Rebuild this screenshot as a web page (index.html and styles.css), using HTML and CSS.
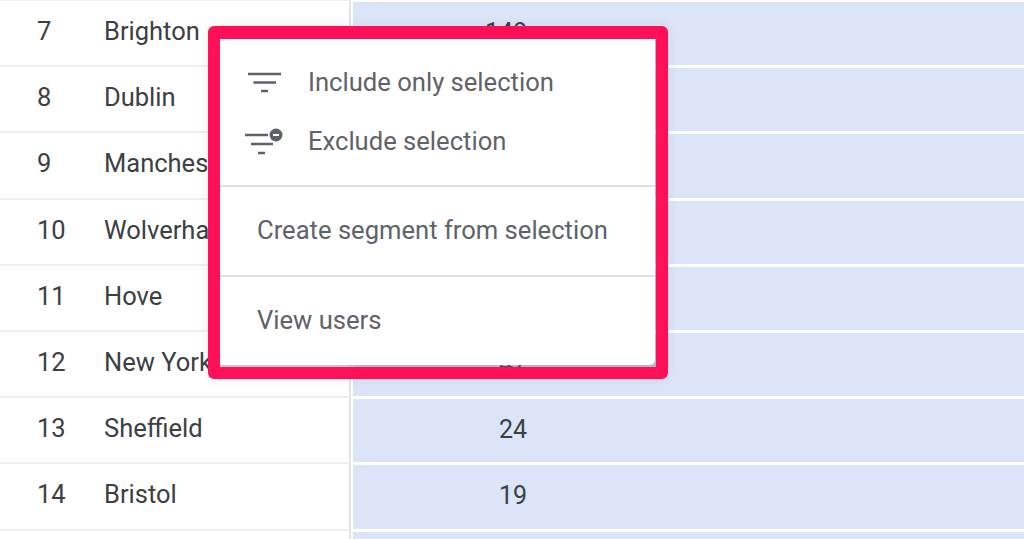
FILE: index.html
```html
<!DOCTYPE html>
<html lang="en">
<head>
<meta charset="utf-8">
<title>Cities</title>
<link rel="stylesheet" href="styles.css">
</head>
<body>
<div class="table">
  <div class="row"><div class="rank">7</div><div class="city">Brighton</div><div class="bar"><span class="val">148</span></div></div>
  <div class="row"><div class="rank">8</div><div class="city">Dublin</div><div class="bar"><span class="val">96</span></div></div>
  <div class="row"><div class="rank">9</div><div class="city">Manchester</div><div class="bar"><span class="val">71</span></div></div>
  <div class="row"><div class="rank">10</div><div class="city">Wolverhampton</div><div class="bar"><span class="val">55</span></div></div>
  <div class="row"><div class="rank">11</div><div class="city">Hove</div><div class="bar"><span class="val">48</span></div></div>
  <div class="row"><div class="rank">12</div><div class="city">New York</div><div class="bar"><span class="val">42</span></div></div>
  <div class="row"><div class="rank">13</div><div class="city">Sheffield</div><div class="bar"><span class="val">24</span></div></div>
  <div class="row"><div class="rank">14</div><div class="city">Bristol</div><div class="bar"><span class="val">19</span></div></div>
  <div class="row"><div class="rank"></div><div class="city"></div><div class="bar"></div></div>
</div>
<div class="menu">
  <div class="menu-inner">
    <div class="group first">
      <div class="item icon-item">
        <svg class="icon" viewBox="0 0 40 30" aria-hidden="true"><path d="M4 6h33M9.500 14.500h22.500M17 23h7" /></svg>
        <span>Include only selection</span>
      </div>
      <div class="item icon-item">
        <svg class="icon" viewBox="0 0 40 30" aria-hidden="true"><path d="M1 8h23M7 17h22M14 26h7" /><circle class="dot" cx="32" cy="8" r="6.500" /><path class="dash" d="M29 8h6" /></svg>
        <span>Exclude selection</span>
      </div>
    </div>
    <div class="group middle"><div class="item">Create segment from selection</div></div>
    <div class="group last"><div class="item">View users</div></div>
  </div>
</div>
</body>
</html>
```

FILE: styles.css
```css
html, body {
  margin: 0;
  height: 100%;
  overflow: hidden;
  background: #fff;
}
body {
  font-family: Roboto, "Liberation Sans", sans-serif;
  color: #3c4043;
}
.table {
  display: flex;
  flex-direction: column;
  margin-top: -1px;
}
.row {
  display: flex;
  height: 66.2px;
  flex: none;
  font-size: 25.500px;
  line-height: 60px;
}
.rank {
  width: 38px;
  padding-left: 37px;
  flex: none;
  border-top: 2px solid #eeeeee;
}
.city {
  width: 245px;
  padding-left: 29px;
  flex: none;
  white-space: nowrap;
  overflow: hidden;
  border-top: 2px solid #eeeeee;
  border-right: 2px solid #e4e4e4;
}
.bar {
  flex: 1;
  margin-left: 2px;
  margin-top: 3px;
  background: #dce5f7;
  padding-left: 132px;
  display: flex;
  font-size: 25px;
}
.val {
  width: 42px;
  text-align: right;
  white-space: nowrap;
  line-height: 61px;
}
.menu {
  position: absolute;
  left: 208px;
  top: 26px;
  width: 460px;
  height: 353px;
  box-sizing: border-box;
  border-style: solid;
  border-color: #ff0f58;
  border-width: 13px 12px 12px;
  border-radius: 6px;
  background: rgba(110, 115, 125, 0.4);
  background-clip: padding-box;
  box-shadow: 0 0 12px rgba(0, 0, 0, 0.08);
}
.menu-inner {
  box-sizing: border-box;
  margin-right: 1px;
  height: calc(100% - 2px);
  background: #fff;
  border-radius: 0 0 5px 0;
  display: flex;
  flex-direction: column;
  font-size: 25.600px;
  color: #5f6368;
}
.group {
  border-bottom: 2px solid #e0e0e0;
  flex: none;
  padding-left: 37px;
  box-sizing: border-box;
}
.first {
  height: 148px;
  padding-left: 24px;
  padding-top: 14px;
}
.middle {
  height: 90px;
}
.last {
  border-bottom: 0;
}
.item {
  line-height: 86px;
  white-space: nowrap;
}
.icon-item {
  display: flex;
  align-items: center;
  line-height: 59px;
  height: 59px;
}
.icon {
  width: 40px;
  height: 30px;
  flex: none;
  margin-right: 24px;
  fill: none;
  stroke: #5f6368;
  stroke-width: 2.500;
}
.dot {
  fill: #5f6368;
  stroke: none;
}
.dash {
  stroke: #fff;
  stroke-width: 2;
}
```
